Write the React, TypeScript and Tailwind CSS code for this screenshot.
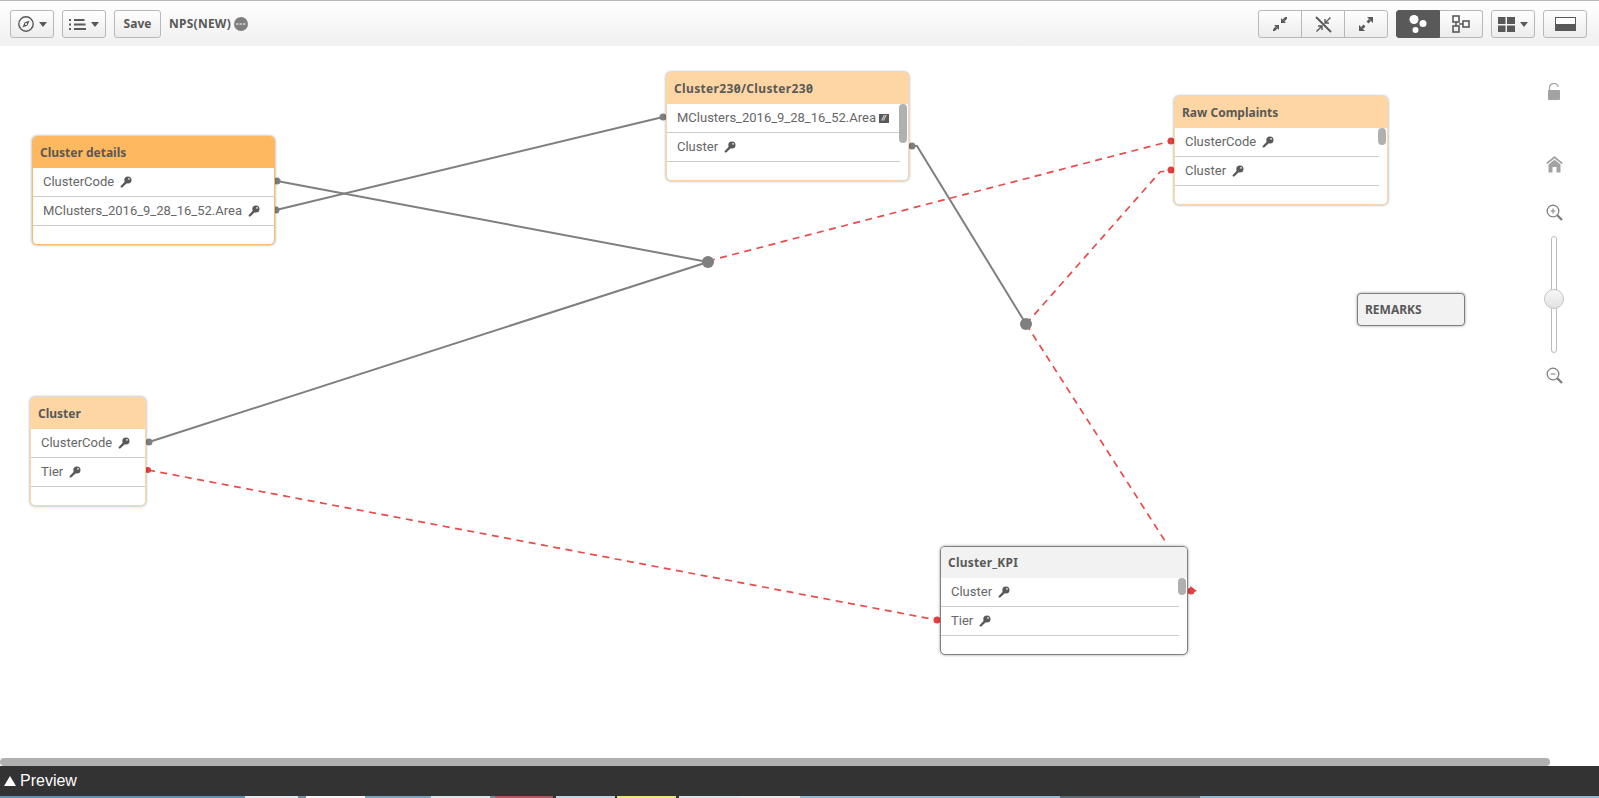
import React from "react";

const FONT = "font-['Noto_Sans','Open_Sans',sans-serif]";

function Key() {
  return (
    <svg width="12" height="12" viewBox="0 0 12 12" className="ml-[6px] shrink-0 inline-block">
      <path d="M0.5 10.2 L5 5.6 L6.8 7.2 L2.2 11.6 L0.8 11.6 Z" fill="#595959" />
      <circle cx="7.9" cy="4" r="3.6" fill="#595959" />
      <circle cx="9" cy="2.9" r="0.8" fill="#fff" />
    </svg>
  );
}

function Hash() {
  return (
    <span className="ml-[3px] inline-flex h-[9px] w-[10px] items-center justify-center bg-[#595959] text-[7px] font-bold italic leading-none text-white">
      //
    </span>
  );
}

type Row = { t: string; icon?: "key" | "hash" };

function TableCard({
  title,
  rows,
  x,
  y,
  w,
  head,
  border,
  scroll,
  thumb = 35,
}: {
  title: string;
  rows: Row[];
  x: number;
  y: number;
  w: number;
  head: string;
  border: string;
  scroll?: boolean;
  thumb?: number;
}) {
  return (
    <div
      className={`absolute flex h-[109px] flex-col overflow-hidden rounded-[5px] border bg-white shadow-[0_0_3px_rgba(0,0,0,0.4)] ${border}`}
      style={{ left: x, top: y, width: w }}
    >
      <div className={`flex h-[31px] shrink-0 items-center pl-[7px] text-[12px] font-bold text-[#595959] ${head}`}>{title}</div>
      <div className="relative flex-1">
        <div className={scroll ? "mr-[8px]" : ""}>
          {rows.map((r) => (
            <div key={r.t} className="flex h-[29px] items-center border-b border-[#cccccc] pl-[10px] font-['Roboto',sans-serif] text-[13px] text-[#666666] slashed-zero">
              <span>{r.t}</span>
              {r.icon === "key" ? <Key /> : <Hash />}
            </div>
          ))}
        </div>
        {scroll && (
          <div className="absolute right-px top-0 w-[8px] rounded-[4px] bg-[#b0b0b0]" style={{ height: thumb }} />
        )}
      </div>
    </div>
  );
}

function Btn({ children, className = "" }: { children: React.ReactNode; className?: string }) {
  return (
    <div
      className={`flex h-[28px] items-center justify-center border border-[#b8b8b8] bg-gradient-to-b from-white to-[#ececec] ${className}`}
    >
      {children}
    </div>
  );
}

function Caret() {
  return <div className="ml-[5px] h-0 w-0 border-x-[4px] border-t-[5px] border-x-transparent border-t-[#595959]" />;
}

function Toolbar() {
  return (
    <div className="flex h-[46px] shrink-0 items-center justify-between border-t border-[#b9b9b9] bg-gradient-to-b from-white to-[#f0f0f0] pl-[10px] pr-[12px] pt-px">
      <div className="flex items-center">
        <Btn className="w-[44px] rounded-[3px]">
          <svg width="16" height="16" viewBox="0 0 16 16">
            <circle cx="8" cy="8" r="7.2" fill="none" stroke="#595959" strokeWidth="1.4" />
            <path d="M11.5 4.5 L9.5 9.5 L4.5 11.5 L6.5 6.5 Z" fill="#595959" />
            <circle cx="8" cy="8" r="1" fill="#fff" />
          </svg>
          <Caret />
        </Btn>
        <Btn className="ml-[8px] w-[44px] rounded-[3px]">
          <svg width="17" height="11" viewBox="0 0 17 11" fill="#595959">
            <rect x="0" y="0" width="2" height="2" />
            <rect x="0" y="4.5" width="2" height="2" />
            <rect x="0" y="9" width="2" height="2" />
            <rect x="5" y="0" width="10.5" height="2" />
            <rect x="5" y="4.5" width="11.5" height="2" />
            <rect x="5" y="9" width="12" height="2" />
          </svg>
          <Caret />
        </Btn>
        <Btn className="ml-[8px] w-[47px] rounded-[3px] text-[12px] font-bold text-[#595959]">Save</Btn>
        <span className="ml-[8px] text-[12px] font-bold tracking-[0.25px] text-[#595959]">NPS(NEW)</span>
        <svg width="14" height="14" viewBox="0 0 14 14" className="ml-[3px]">
          <circle cx="7" cy="7" r="7" fill="#7f7f7f" />
          <path d="M2 7 H12" stroke="#fff" strokeWidth="1" strokeDasharray="2.5 1" />
        </svg>
      </div>
      <div className="flex items-center">
        <div className="flex">
          <Btn className="w-[44px] rounded-l-[3px]">
            <svg width="14" height="14" viewBox="0 0 14 14" fill="#595959" stroke="none">
              <path d="M8 1 V6 H13 Z" />
              <path d="M10.5 3.5 L14 0" stroke="#595959" strokeWidth="2.6" />
              <path d="M6 13 V8 H1 Z" />
              <path d="M3.5 10.5 L0 14" stroke="#595959" strokeWidth="2.6" />
            </svg>
          </Btn>
          <Btn className="ml-[-1px] w-[44px]">
            <svg width="17" height="17" viewBox="0 0 17 17" fill="none" stroke="#595959" strokeWidth="1.4">
              <path d="M1 1 L16 16" strokeWidth="2" />
              <path d="M15.5 1.5 L10 7 M10 3 V7 H14" />
              <path d="M1.5 15.5 L7 10 M3 10 H7 V14" />
            </svg>
          </Btn>
          <Btn className="ml-[-1px] w-[44px] rounded-r-[3px]">
            <svg width="16" height="16" viewBox="0 0 16 16" fill="#595959">
              <path d="M9 1 H15 V7 Z" />
              <path d="M12 4 L9.5 6.5" stroke="#595959" strokeWidth="2.6" />
              <path d="M7 15 H1 V9 Z" />
              <path d="M4 12 L6.5 9.5" stroke="#595959" strokeWidth="2.6" />
            </svg>
          </Btn>
        </div>
        <div className="ml-[8px] flex">
          <div className="flex h-[28px] w-[44px] items-center justify-center rounded-l-[3px] border border-[#595959] bg-[#595959]">
            <svg width="18" height="18" viewBox="0 0 18 18" fill="#fff">
              <circle cx="5" cy="4.5" r="4.5" />
              <circle cx="14" cy="8.5" r="3.5" />
              <circle cx="6.5" cy="15" r="3" />
            </svg>
          </div>
          <Btn className="w-[43px] rounded-r-[3px] border-l-0">
            <svg width="18" height="18" viewBox="0 0 18 18" fill="none" stroke="#595959" strokeWidth="1.6">
              <rect x="1" y="1" width="6" height="6" />
              <rect x="1" y="11" width="6" height="6" />
              <rect x="11" y="6" width="6" height="6" />
              <path d="M4 7 V11 M7 9 H11" />
            </svg>
          </Btn>
        </div>
        <Btn className="ml-[8px] w-[44px] rounded-[3px]">
          <svg width="17" height="15" viewBox="0 0 17 15" fill="#595959">
            <rect x="0" y="0" width="7.5" height="7" />
            <rect x="9" y="0" width="8" height="7" />
            <rect x="0" y="8.5" width="7.5" height="6.5" />
            <rect x="9" y="8.5" width="8" height="6.5" />
          </svg>
          <Caret />
        </Btn>
        <Btn className="ml-[8px] w-[44px] rounded-[3px]">
          <svg width="21" height="14" viewBox="0 0 21 14">
            <rect x="0.5" y="0.5" width="20" height="13" fill="#fff" stroke="#595959" />
            <rect x="0" y="7" width="21" height="7" fill="#595959" />
          </svg>
        </Btn>
      </div>
    </div>
  );
}

function Links() {
  return (
    <svg className="absolute left-0 top-0" width="1599" height="712" viewBox="0 46 1599 712">
      <g fill="none" stroke="#7f7f7f" strokeWidth="2">
        <path d="M277 181 L708 262" />
        <path d="M276 210 L663 117" />
        <path d="M149 442 L708 262" />
        <path d="M912 146 L917 146 L1026 324" />
      </g>
      <g fill="none" stroke="#ea4a4a" strokeWidth="1.7" strokeDasharray="7 5.5">
        <path d="M708 261 L1171 141" />
        <path d="M1026 324 L1160 172 L1171 170" />
        <path d="M1026 324 L1165 541" />
        <path d="M148 470 L937 620" />
      </g>
      <g fill="#7f7f7f">
        <circle cx="277" cy="181" r="3.5" />
        <circle cx="276" cy="210" r="3.5" />
        <circle cx="663" cy="117" r="3.5" />
        <circle cx="912" cy="146" r="3.5" />
        <circle cx="149" cy="442" r="3.5" />
        <circle cx="708" cy="262" r="6" />
        <circle cx="1026" cy="324" r="6" />
      </g>
      <g fill="#e5403f">
        <circle cx="1171" cy="141" r="3.5" />
        <circle cx="1171" cy="170" r="3.5" />
        <circle cx="148" cy="470" r="3" />
        <circle cx="937" cy="620" r="3.5" />
        <circle cx="1191" cy="591" r="3.5" />
        <path d="M1190 586 L1197 591 L1191 593 Z" />
      </g>
    </svg>
  );
}

function Navigator() {
  return (
    <div className="absolute left-[1544px] top-[37px] flex w-[20px] flex-col items-center">
      <svg width="14" height="17" viewBox="0 0 14 17">
        <path d="M2.5 8 V5 A4.4 4.4 0 0 1 11.2 4" fill="none" stroke="#a3a3a3" strokeWidth="1.2" />
        <rect x="1" y="7" width="12" height="10" rx="1" fill="#a3a3a3" />
      </svg>
      <svg width="17" height="17" viewBox="0 0 17 17" className="mt-[56px]">
        <path d="M8.5 0 L17 7 L15.5 8 L8.5 2.5 L1.5 8 L0 7 Z" fill="#a3a3a3" />
        <path d="M2.5 8.5 L8.5 3.8 L14.5 8.5 V16.5 H10.5 V11 H6.5 V16.5 H2.5 Z" fill="#a3a3a3" />
      </svg>
      <svg width="17" height="17" viewBox="0 0 17 17" className="mt-[31px]" fill="none" stroke="#808080">
        <circle cx="7" cy="7" r="5.8" strokeWidth="1.3" />
        <path d="M11 11 L16 16" strokeWidth="2.4" />
        <path d="M4.5 7 H9.5 M7 4.5 V9.5" strokeWidth="1" />
      </svg>
      <div className="relative mt-[15px] flex h-[117px] w-full justify-center">
        <div className="h-full w-[6px] rounded-[3px] border border-[#bcbcbc] bg-white" />
        <div className="absolute left-[0px] top-[53px] h-[20px] w-[20px] rounded-full border border-[#c4c4c4] bg-gradient-to-b from-[#f7f7f7] to-[#e2e2e2]" />
      </div>
      <svg width="17" height="17" viewBox="0 0 17 17" className="mt-[14px]" fill="none" stroke="#808080">
        <circle cx="7" cy="7" r="5.8" strokeWidth="1.3" />
        <path d="M11 11 L16 16" strokeWidth="2.4" />
        <path d="M4.5 7 H9.5" strokeWidth="1" />
      </svg>
    </div>
  );
}

const STRIP: { w: number; c: string }[] = [
  { w: 245, c: "#5f93b5" },
  { w: 53, c: "#dfe8ec" },
  { w: 8, c: "#6f8fa5" },
  { w: 59, c: "#f4f4f4" },
  { w: 66, c: "#7ba6c2" },
  { w: 59, c: "#d8e4ea" },
  { w: 5, c: "#6f8fa5" },
  { w: 58, c: "#b2565f" },
  { w: 3, c: "#333333" },
  { w: 59, c: "#bcd6e4" },
  { w: 2, c: "#333333" },
  { w: 59, c: "#ece77a" },
  { w: 3, c: "#333333" },
  { w: 61, c: "#dbe6ec" },
  { w: 60, c: "#e8e8e8" },
  { w: 260, c: "#8fbbd6" },
  { w: 140, c: "#5a6a76" },
  { w: 399, c: "#8fbbd6" },
];

export default function App() {
  return (
    <div className={`flex h-[798px] w-[1599px] flex-col overflow-hidden bg-white ${FONT}`}>
      <Toolbar />
      <div className="relative flex-1">
        <Links />
        <TableCard title="Cluster details" x={32} y={90} w={243} head="bg-[#fdb860]" border="border-[#fdb860]"
          rows={[{ t: "ClusterCode", icon: "key" }, { t: "MClusters_2016_9_28_16_52.Area", icon: "key" }]} />
        <TableCard title="Cluster230/Cluster230" x={666} y={26} w={243} head="bg-[#fdd6a3] slashed-zero tracking-[0.35px]" border="border-[#fdd6a3]" scroll thumb={39}
          rows={[{ t: "MClusters_2016_9_28_16_52.Area", icon: "hash" }, { t: "Cluster", icon: "key" }]} />
        <TableCard title="Raw Complaints" x={1174} y={50} w={214} head="bg-[#fdd6a3]" border="border-[#fdd6a3]" scroll thumb={17}
          rows={[{ t: "ClusterCode", icon: "key" }, { t: "Cluster", icon: "key" }]} />
        <TableCard title="Cluster" x={30} y={351} w={116} head="bg-[#fdd6a3]" border="border-[#fdd6a3]"
          rows={[{ t: "ClusterCode", icon: "key" }, { t: "Tier", icon: "key" }]} />
        <TableCard title="Cluster_KPI" x={940} y={500} w={248} head="bg-[#f2f2f2] tracking-[0.2px]" border="border-[#7f7f7f]" scroll thumb={17}
          rows={[{ t: "Cluster", icon: "key" }, { t: "Tier", icon: "key" }]} />
        <div className="absolute left-[1357px] top-[247px] flex h-[33px] w-[108px] items-center rounded-[4px] border border-[#7f7f7f] bg-[#f2f2f2] pl-[7px] text-[12px] font-bold text-[#595959] shadow-[0_0_3px_rgba(0,0,0,0.4)]">
          REMARKS
        </div>
        <Navigator />
      </div>
      <div className="h-[8px] shrink-0 bg-white">
        <div className="h-full w-[1550px] rounded-[4px] bg-[#b0b0b0]" />
      </div>
      <div className="flex h-[30px] shrink-0 items-center bg-[#333333] pl-[4px] font-['Liberation_Sans',sans-serif] text-[16px] text-white">
        <span className="mr-[4px] h-0 w-0 border-x-[6px] border-b-[10px] border-x-transparent border-b-white" />
        Preview
      </div>
      <div className="flex h-[2px] shrink-0">
        {STRIP.map((s, i) => (
          <div key={i} className="h-full" style={{ width: s.w, backgroundColor: s.c }} />
        ))}
      </div>
    </div>
  );
}
